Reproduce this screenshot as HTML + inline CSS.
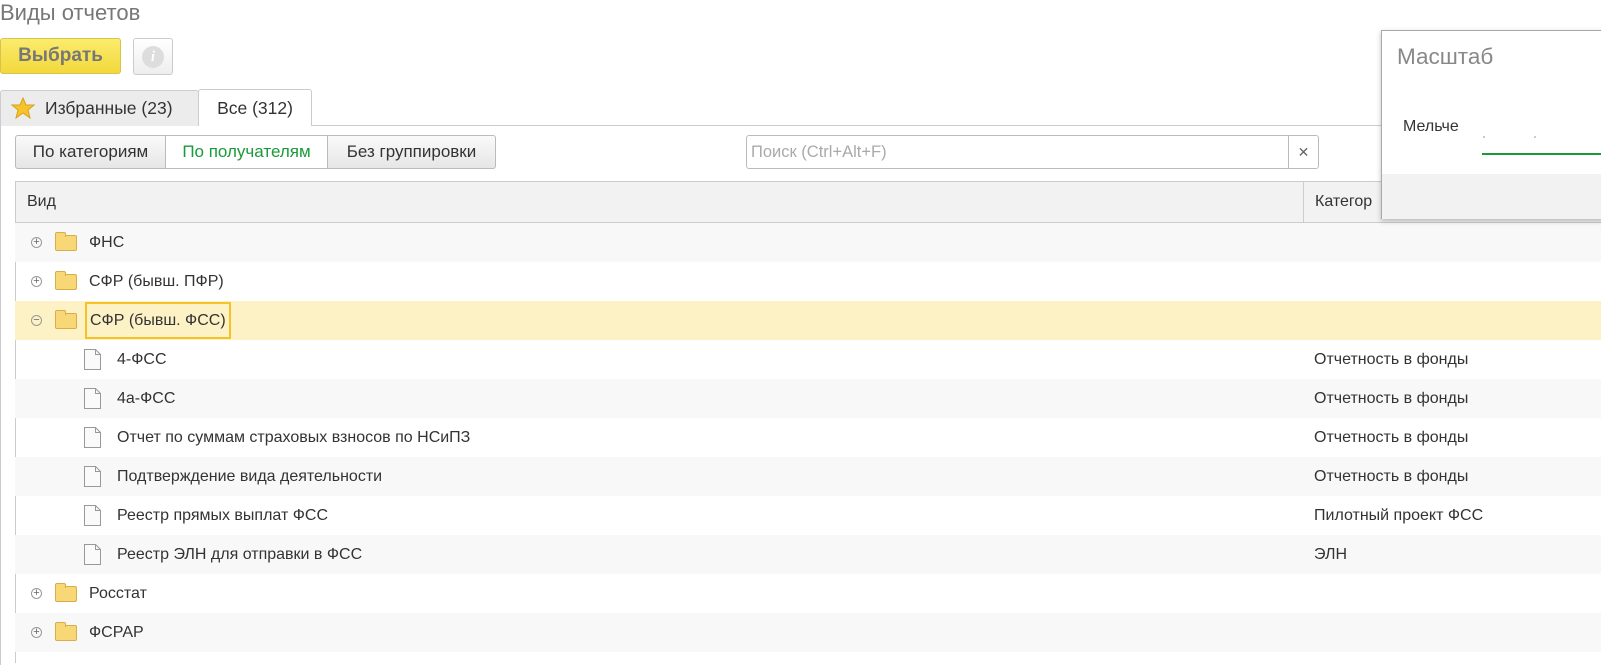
<!DOCTYPE html><html><head><meta charset="utf-8"><style>
*{box-sizing:border-box;margin:0;padding:0}
body{width:1601px;height:663px;overflow:hidden;background:#fff;font-family:"Liberation Sans",Arial,sans-serif;font-size:16px;color:#333;position:relative}
.a{position:absolute}
.row{position:absolute;left:15px;width:1600px;height:39px;line-height:39px;font-size:16px}
.g{background:#f8f8f8}
.fold{position:absolute;top:12px;width:22px;height:16px;background:#f8d776;border:1px solid #d8ad4a;border-radius:2px}
.fold:before{content:"";position:absolute;left:-1px;top:-4px;width:9px;height:4px;background:#f8d776;border:1px solid #d8ad4a;border-bottom:none;border-radius:2px 2px 0 0}
.pm{position:absolute;top:14px;left:16px;width:11px;height:11px;border:1px solid #999;border-radius:50%;font-size:11px;line-height:8px;text-align:center;color:#666}
.doc{position:absolute;left:69px;top:9px}
.cat{position:absolute;left:1299px}
</style></head><body>
<div class="a" style="left:0;top:0;font-size:22px;color:#777">Виды отчетов</div>
<div class="a" style="left:0;top:38px;width:121px;height:36px;background:linear-gradient(#fbec6e,#f2d83b);border:1px solid #d8c44a;border-radius:3px;font-weight:bold;font-size:19px;color:#777;text-align:center;line-height:34px">Выбрать</div>
<div class="a" style="left:133px;top:38px;width:40px;height:37px;border:1px solid #ccc;border-radius:3px;background:linear-gradient(#fff,#eee)"><div style="position:absolute;left:8px;top:7px;width:22px;height:22px;border-radius:50%;background:#ddd;color:#fff;font:bold italic 15px 'Liberation Serif',serif;text-align:center;line-height:22px">i</div></div>
<div class="a" style="left:0;top:125px;width:1601px;height:1px;background:#ccc"></div>
<div class="a" style="left:0;top:125px;width:1px;height:540px;background:#ccc"></div>
<div class="a" style="left:0;top:90px;width:199px;height:36px;background:#ececec;border:1px solid #ccc;border-bottom:none;border-radius:3px 3px 0 0;line-height:34px;padding-left:44px;font-size:17.5px">Избранные (23)</div>
<svg class="a" style="left:11px;top:97px" width="24" height="22" viewBox="0 0 24 22"><polygon points="12,1 15,8 23,8 17,13 19,21 12,16 5,21 7,13 1,8 9,8" fill="#f6c32a" stroke="#d9a11a"/></svg>
<div class="a" style="left:198px;top:89px;width:114px;height:37px;background:#fff;border:1px solid #ccc;border-bottom:none;border-radius:3px 3px 0 0;line-height:36px;text-align:center;font-size:17.5px">Все (312)</div>
<div class="a" style="left:15px;top:135px;width:481px;height:34px;border:1px solid #bbb;border-radius:3px;background:linear-gradient(#fafafa,#e6e6e6);display:flex;line-height:32px;font-size:17px;white-space:nowrap">
<div style="width:150px;text-align:center;border-right:1px solid #bbb">По категориям</div>
<div style="width:162px;text-align:center;border-right:1px solid #bbb;background:#fff;color:#1a9a3a">По получателям</div>
<div style="flex:1;text-align:center">Без группировки</div></div>
<div class="a" style="left:746px;top:135px;width:573px;height:34px;border:1px solid #bbb;border-radius:3px;line-height:32px;padding-left:4px;color:#aaa;font-size:16.5px">Поиск (Ctrl+Alt+F)<div style="position:absolute;right:0;top:0;width:30px;height:32px;border-left:1px solid #bbb;color:#666;text-align:center;font-size:14px">✕</div></div>
<div class="a" style="left:15px;top:181px;width:1600px;height:42px;background:#f2f2f2;border:1px solid #ccc;line-height:40px;padding-left:11px;font-size:16px">Вид<div style="position:absolute;left:1287px;top:0;height:40px;border-left:1px solid #ccc;padding-left:11px">Категор</div></div>
<div class="a" style="left:15px;top:181px;width:1px;height:482px;background:#ccc"></div>

<div class="row g" style="top:223px"><div class="pm">+</div><div class="fold" style="left:40px"></div><span class="a" style="left:74px">ФНС</span></div>
<div class="row" style="top:262px"><div class="pm">+</div><div class="fold" style="left:40px"></div><span class="a" style="left:74px">СФР (бывш. ПФР)</span></div>
<div class="row" style="top:301px;background:#fdf2c6"><div class="pm">−</div><div class="fold" style="left:40px"></div><span class="a" style="left:70px;top:1px;height:37px;line-height:33px;padding:0 3px;border:2px solid #f5c227">СФР (бывш. ФСС)</span></div>
<div class="row" style="top:340px"><svg class="doc" width="17" height="21"><path d="M.5 .5H11.5L16.5 5.5V20.5H.5Z" fill="#fafafa" stroke="#999"/><path d="M11.5 .5V5.5H16.5" fill="none" stroke="#999"/></svg><span class="a" style="left:102px">4-ФСС</span><span class="cat">Отчетность в фонды</span></div>
<div class="row g" style="top:379px"><svg class="doc" width="17" height="21"><path d="M.5 .5H11.5L16.5 5.5V20.5H.5Z" fill="#fafafa" stroke="#999"/><path d="M11.5 .5V5.5H16.5" fill="none" stroke="#999"/></svg><span class="a" style="left:102px">4а-ФСС</span><span class="cat">Отчетность в фонды</span></div>
<div class="row" style="top:418px"><svg class="doc" width="17" height="21"><path d="M.5 .5H11.5L16.5 5.5V20.5H.5Z" fill="#fafafa" stroke="#999"/><path d="M11.5 .5V5.5H16.5" fill="none" stroke="#999"/></svg><span class="a" style="left:102px">Отчет по суммам страховых взносов по НСиПЗ</span><span class="cat">Отчетность в фонды</span></div>
<div class="row g" style="top:457px"><svg class="doc" width="17" height="21"><path d="M.5 .5H11.5L16.5 5.5V20.5H.5Z" fill="#fafafa" stroke="#999"/><path d="M11.5 .5V5.5H16.5" fill="none" stroke="#999"/></svg><span class="a" style="left:102px">Подтверждение вида деятельности</span><span class="cat">Отчетность в фонды</span></div>
<div class="row" style="top:496px"><svg class="doc" width="17" height="21"><path d="M.5 .5H11.5L16.5 5.5V20.5H.5Z" fill="#fafafa" stroke="#999"/><path d="M11.5 .5V5.5H16.5" fill="none" stroke="#999"/></svg><span class="a" style="left:102px">Реестр прямых выплат ФСС</span><span class="cat">Пилотный проект ФСС</span></div>
<div class="row g" style="top:535px"><svg class="doc" width="17" height="21"><path d="M.5 .5H11.5L16.5 5.5V20.5H.5Z" fill="#fafafa" stroke="#999"/><path d="M11.5 .5V5.5H16.5" fill="none" stroke="#999"/></svg><span class="a" style="left:102px">Реестр ЭЛН для отправки в ФСС</span><span class="cat">ЭЛН</span></div>
<div class="row" style="top:574px"><div class="pm">+</div><div class="fold" style="left:40px"></div><span class="a" style="left:74px">Росстат</span></div>
<div class="row g" style="top:613px"><div class="pm">+</div><div class="fold" style="left:40px"></div><span class="a" style="left:74px">ФСРАР</span></div>

<div class="a" style="left:1381px;top:30px;width:230px;height:189px;background:#fff;border:1px solid #aaa;box-shadow:0 2px 5px rgba(0,0,0,.25)">
<div class="a" style="left:15px;top:13px;font-size:22.5px;color:#888">Масштаб</div>
<div class="a" style="left:21px;top:87px;font-size:16px">Мельче</div>
<div class="a" style="left:101px;top:105px;width:2px;height:2px;background:#ccc"></div>
<div class="a" style="left:152px;top:105px;width:2px;height:2px;background:#ccc"></div>
<div class="a" style="left:100px;top:122px;width:130px;height:2px;background:#1a9a3a"></div>
<div class="a" style="left:0;top:143px;width:230px;height:45px;background:#f2f2f2"></div>
</div>
</body></html>
